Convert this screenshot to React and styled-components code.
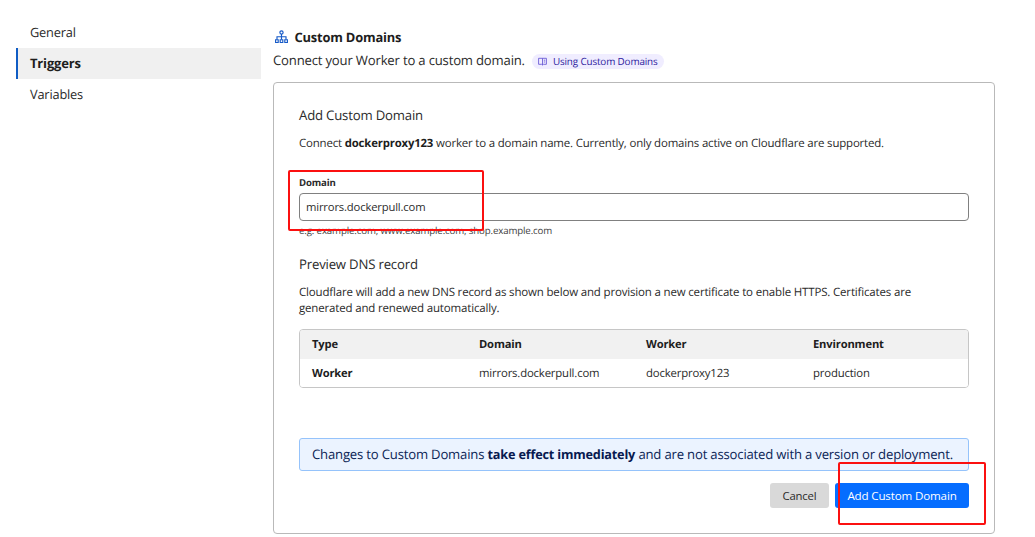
import React from 'react';
import styled, { createGlobalStyle } from 'styled-components';

const GlobalStyle = createGlobalStyle`
  * { box-sizing: border-box; }
  body {
    margin: 0;
    background: #fff;
    color: #2b2b2b;
    font-family: "Open Sans", "Noto Sans", sans-serif;
    font-size: 11.45px;
    text-rendering: geometricPrecision;
  }
  h1, h2, p { margin: 0; }
  a, h1, h2, p, span, label, input, button, div, strong { letter-spacing: -0.0145em; }
`;

const Page = styled.div`
  display: flex;
  align-items: flex-start;
  height: 537px;
  padding: 17px 40px 0 16px;
  overflow: hidden;
`;

const Nav = styled.nav`
  display: flex;
  flex-direction: column;
  width: 245px;
  margin-right: 12px;
`;

const NavItem = styled.a`
  height: 31px;
  padding-left: 12px;
  border-left: 2px solid ${(p) => (p.$active ? '#0f5cc4' : 'transparent')};
  background: ${(p) => (p.$active ? '#f0f0f0' : 'transparent')};
  color: ${(p) => (p.$active ? '#1d1d1d' : '#2b2b2b')};
  font-size: ${(p) => (p.$active ? '13.05px' : '12.8px')};
  font-weight: ${(p) => (p.$active ? 700 : 400)};
  line-height: ${(p) => (p.$active ? 30 : 31)}px;
`;

const Main = styled.main`
  width: 722px;
  padding-top: 11px;
`;

const TitleRow = styled.div`
  display: flex;
  align-items: center;
  gap: 6.5px;
  height: 18px;
  padding-left: 2px;
`;

const Title = styled.h1`
  color: #1d1d1d;
  font-size: 12.9px;
  font-weight: 700;
  line-height: 19px;
`;

const Subtitle = styled.div`
  display: flex;
  align-items: center;
  gap: 7px;
  height: 22px;
  margin-top: 3px;
  font-size: 13.14px;
  line-height: 20px;
  white-space: nowrap;
`;

const DocLink = styled.a`
  display: flex;
  align-items: center;
  gap: 6px;
  height: 15px;
  margin-top: 2px;
  padding: 0 6px;
  border-radius: 8px;
  background: #f0edff;
  color: #2c1c9e;
  font-size: 9.88px;
  line-height: 15px;
`;

const Card = styled.section`
  display: flex;
  flex-direction: column;
  height: 452px;
  margin-top: 11px;
  padding: 22px 25px 0;
  border: 1px solid #b9b9b9;
  border-radius: 4px;
`;

const Heading = styled.h2`
  height: 20px;
  margin-top: ${(p) => p.$top || 0}px;
  font-size: 13.18px;
  font-weight: 400;
  line-height: 20px;
`;

const Text = styled.p`
  margin-top: ${(p) => p.$top}px;
  font-size: ${(p) => p.$size || 11.45}px;
  line-height: 16px;
  white-space: nowrap;
`;

const Strong = styled.strong`
  color: ${(p) => p.$color || '#1d1d1d'};
  font-size: ${(p) => p.$size || 11.35}px;
  font-weight: 700;
`;

const Field = styled.div`
  position: relative;
  display: flex;
  flex-direction: column;
  margin-top: 24px;
`;

const Label = styled.label`
  height: 14px;
  color: #2b2b2b;
  font-size: 9.62px;
  font-weight: 700;
  line-height: 14px;
`;

const Input = styled.input`
  height: 28px;
  margin-top: 3px;
  padding: 0 6px 2px;
  border: 1px solid #808080;
  border-radius: 4px;
  outline: none;
  background: #fff;
  color: #2b2b2b;
  font: 11.25px "Open Sans", "Noto Sans", sans-serif;
`;

const Hint = styled.div`
  height: 14px;
  margin-top: 3px;
  color: #414141;
  font-size: 9.7px;
  line-height: 14px;
`;

const Highlight = styled.div`
  position: absolute;
  top: ${(p) => p.$top}px;
  left: ${(p) => p.$left}px;
  width: ${(p) => p.$width}px;
  height: ${(p) => p.$height}px;
  border: 2px solid #fb1010;
  border-radius: 2px;
  pointer-events: none;
`;

const Table = styled.div`
  height: 59px;
  margin-top: 12px;
  border: 1px solid #c6c6c6;
  border-radius: 4px;
  overflow: hidden;
`;

const Row = styled.div`
  display: grid;
  grid-template-columns: repeat(4, 167px);
  height: ${(p) => (p.$head ? 29 : 28)}px;
  background: ${(p) => (p.$head ? '#f1f1f1' : '#fff')};
  line-height: 29px;
`;

const Cell = styled.div`
  padding-left: 12px;
  color: ${(p) => (p.$bold ? '#1d1d1d' : '#2b2b2b')};
  font-size: ${(p) => (p.$bold ? 11.2 : 11.35)}px;
  font-weight: ${(p) => (p.$bold ? 700 : 400)};
`;

const Banner = styled.div`
  height: 33px;
  margin-top: 50px;
  padding-left: 12px;
  border: 1px solid #95c3fb;
  border-radius: 3px;
  background: #ebf3ff;
  color: #0b2556;
  font-size: 13.14px;
  line-height: 31px;
  white-space: nowrap;
`;

const Actions = styled.div`
  position: relative;
  display: flex;
  justify-content: flex-end;
  gap: 6px;
  margin-top: 12px;
`;

const Button = styled.button`
  width: ${(p) => (p.$primary ? 134 : 59)}px;
  height: 25px;
  padding: 0 0 1px;
  border: 0;
  border-radius: 3px;
  background: ${(p) => (p.$primary ? '#056dff' : '#d9d9d9')};
  color: ${(p) => (p.$primary ? '#fff' : '#2b2b2b')};
  font: ${(p) => (p.$primary ? '11.62px' : '11.33px')}/23px "Open Sans", "Noto Sans", sans-serif;
  white-space: nowrap;
`;

const NetworkIcon = () => (
  <svg width="13" height="14" viewBox="0 0 13 14" fill="none" stroke="#1559c7" strokeWidth="1.15">
    <circle cx="6.5" cy="2.4" r="1.6" />
    <path d="M6.5 4.1v5.4M2 9.5V6.7h9v2.8" />
    <path d="M.6 9.7h2.6v2.8H.6zM5.2 9.7h2.6v2.8H5.2zM9.8 9.7h2.6v2.8H9.8z" />
  </svg>
);

const BookIcon = () => (
  <svg width="9" height="9" viewBox="0 0 9 9" fill="none" stroke="#5b4ad0" strokeWidth=".8">
    <path d="M4.5 1.3H.6v6h3l.9.7.9-.7h3v-6H4.5zM4.5 1.3V8M5.8 3.2h1.4M5.8 5h1.4" />
  </svg>
);

const records = [
  ['Worker', 'mirrors.dockerpull.com', 'dockerproxy123', 'production'],
];

export default function App() {
  return (
    <>
      <GlobalStyle />
      <Page>
        <Nav>
          <NavItem>General</NavItem>
          <NavItem $active>Triggers</NavItem>
          <NavItem>Variables</NavItem>
        </Nav>
        <Main>
          <TitleRow>
            <NetworkIcon />
            <Title>Custom Domains</Title>
          </TitleRow>
          <Subtitle>
            <span>Connect your Worker to a custom domain.</span>
            <DocLink>
              <BookIcon />
              <span>Using Custom Domains</span>
            </DocLink>
          </Subtitle>
          <Card>
            <Heading>Add Custom Domain</Heading>
            <Text $top={11}>
              Connect <Strong>dockerproxy123</Strong> worker to a domain name. Currently, only domains active on Cloudflare are supported.
            </Text>
            <Field>
              <Label htmlFor="domain">Domain</Label>
              <Input id="domain" defaultValue="mirrors.dockerpull.com" />
              <Hint>e.g. example.com, www.example.com, shop.example.com</Hint>
              <Highlight $top={-6} $left={-11} $width={196} $height={61} />
            </Field>
            <Heading $top={16}>Preview DNS record</Heading>
            <Text $top={11} $size={11.5}>
              Cloudflare will add a new DNS record as shown below and provision a new certificate to enable HTTPS. Certificates are
              <br />
              generated and renewed automatically.
            </Text>
            <Table>
              <Row $head>
                {['Type', 'Domain', 'Worker', 'Environment'].map((name) => (
                  <Cell key={name} $bold>{name}</Cell>
                ))}
              </Row>
              {records.map((record) => (
                <Row key={record[1]}>
                  {record.map((value, i) => (
                    <Cell key={value} $bold={i === 0}>{value}</Cell>
                  ))}
                </Row>
              ))}
            </Table>
            <Banner>
              Changes to Custom Domains{' '}
              <Strong $color="#07194f" $size={12.7}>take effect immediately</Strong>
              {' '}and are not associated with a version or deployment.
            </Banner>
            <Actions>
              <Button>Cancel</Button>
              <Button $primary>Add Custom Domain</Button>
              <Highlight $top={-21} $left={539} $width={148} $height={63} />
            </Actions>
          </Card>
        </Main>
      </Page>
    </>
  );
}
